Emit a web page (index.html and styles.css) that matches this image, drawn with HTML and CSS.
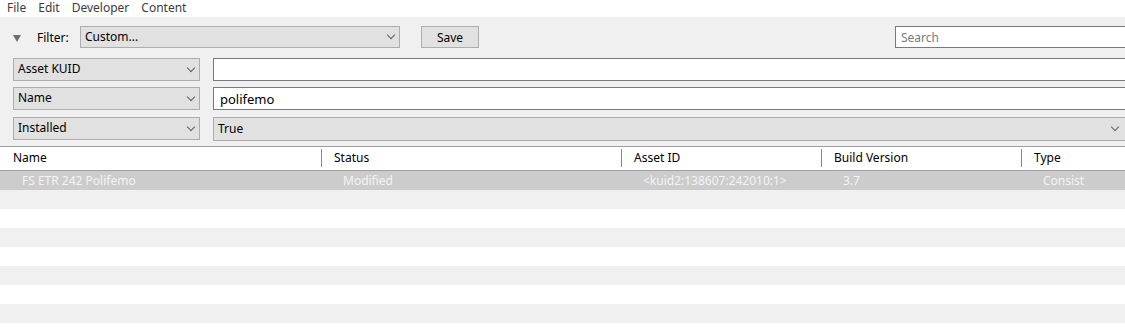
FILE: index.html
```html
<!DOCTYPE html>
<html lang="en">

<head>
    <meta charset="UTF-8">
    <meta name="viewport" content="width=device-width, initial-scale=1.0">
    <link rel="stylesheet" href="styles.css">
    <title>Content Manager</title>
</head>

<body>

    <div class="menubar">
        <span>File</span>
        <span>Edit</span>
        <span>Developer</span>
        <span>Content</span>
    </div>

    <div class="toolbar">
        <div class="filter-row">
            <span class="triangle"></span>
            <span class="filter-label">Filter:</span>
            <div class="combo filter-combo">Custom...<span class="chevron"></span></div>
            <button class="save">Save</button>
            <input type="text" class="search" placeholder="Search">
        </div>

        <div class="criteria">
            <div class="combo field">Asset KUID<span class="chevron"></span></div>
            <input type="text" class="value">
        </div>
        <div class="criteria">
            <div class="combo field">Name<span class="chevron"></span></div>
            <input type="text" class="value" value="polifemo">
        </div>
        <div class="criteria">
            <div class="combo field">Installed<span class="chevron"></span></div>
            <div class="combo value">True<span class="chevron"></span></div>
        </div>
    </div>

    <div class="list">
        <div class="list-head">
            <div class="col">Name</div>
            <div class="col">Status</div>
            <div class="col">Asset ID</div>
            <div class="col">Build Version</div>
            <div class="col">Type</div>
        </div>
        <div class="list-row selected">
            <div>FS ETR 242 Polifemo</div>
            <div>Modified</div>
            <div>&lt;kuid2:138607:242010:1&gt;</div>
            <div>3.7</div>
            <div>Consist</div>
        </div>
        <div class="list-row"></div>
        <div class="list-row"></div>
        <div class="list-row"></div>
        <div class="list-row"></div>
        <div class="list-row"></div>
        <div class="list-row"></div>
        <div class="list-row"></div>
        <div class="list-row"></div>
    </div>

</body>

</html>
```

FILE: styles.css
```css
body {
    margin: 0;
    font-family: 'Noto Sans', sans-serif;
    font-size: 12px;
    color: #000;
    background-color: #fff;
    overflow: hidden;
}

.menubar {
    display: flex;
    height: 17px;
    line-height: 16px;
    padding-left: 7px;
    gap: 12px;
    color: #3c3c3c;
}

.toolbar {
    background-color: #f0f0f0;
    padding: 9px 0 5px 13px;
    overflow: hidden;
    border-bottom: 1px solid #a0a0a0;
}

.filter-row {
    display: flex;
    align-items: center;
    height: 22px;
}

.filter-row > * {
    flex-shrink: 0;
}

.triangle {
    width: 0;
    height: 0;
    margin-top: 2px;
    border-left: 4px solid transparent;
    border-right: 4px solid transparent;
    border-top: 7px solid #6d6d6d;
}

.filter-label {
    margin-left: 16px;
    width: 43px;
}

.combo {
    position: relative;
    box-sizing: border-box;
    height: 22px;
    line-height: 19px;
    padding-left: 4px;
    background-color: #e1e1e1;
    border: 1px solid #adadad;
}

.chevron {
    position: absolute;
    right: 5px;
    top: 5px;
    width: 5px;
    height: 5px;
    border-right: 1px solid #606060;
    border-bottom: 1px solid #606060;
    transform: rotate(45deg);
}

.filter-combo {
    width: 320px;
}

.save {
    box-sizing: border-box;
    margin-left: 21px;
    width: 58px;
    height: 22px;
    font-family: inherit;
    font-size: 12px;
    background-color: #e1e1e1;
    border: 1px solid #adadad;
    padding: 0;
}

.search {
    box-sizing: border-box;
    margin-left: 416px;
    width: 260px;
    height: 22px;
    padding: 0 5px;
    font-family: inherit;
    font-size: 12px;
    border: 1px solid #7a7a7a;
    background-color: #fff;
}

.search::placeholder {
    color: #7a7a7a;
}

.criteria {
    display: flex;
    gap: 13px;
    margin-top: 10px;
}

.criteria + .criteria {
    margin-top: 6px;
}

.criteria:last-child {
    margin-top: 7px;
}

.field {
    width: 187px;
    height: 23px;
    line-height: 20px;
    flex-shrink: 0;
}

.field .chevron {
    top: 6px;
}

.criteria .value {
    box-sizing: border-box;
    width: 920px;
    flex-shrink: 0;
    height: 23px;
}

.criteria input.value {
    padding: 0 6px;
    font-family: inherit;
    font-size: 13px;
    border: 1px solid #7a7a7a;
    background-color: #fff;
    color: #000;
}

.criteria .combo.value {
    height: 24px;
    line-height: 21px;
}

.criteria .combo.value .chevron {
    right: 14px;
    top: 6px;
}

.list-head,
.list-row {
    display: grid;
    grid-template-columns: 321px 300px 200px 200px 1fr;
}

.list-head {
    height: 23px;
    border-bottom: 1px solid #a0a0a0;
}

.list-head .col {
    margin: 2px 0 3px;
    line-height: 18px;
    padding-left: 12px;
    border-left: 1px solid #8a8a8a;
}

.list-head .col:first-child {
    padding-left: 13px;
    border-left: none;
}

.list-row {
    height: 19px;
    line-height: 19px;
}

.list-row:nth-child(odd) {
    background-color: #f0f0f0;
}

.list-row div {
    padding-left: 22px;
    white-space: nowrap;
}

.list-row.selected {
    background-color: #cccccc;
    color: #f4f4f4;
}
```
